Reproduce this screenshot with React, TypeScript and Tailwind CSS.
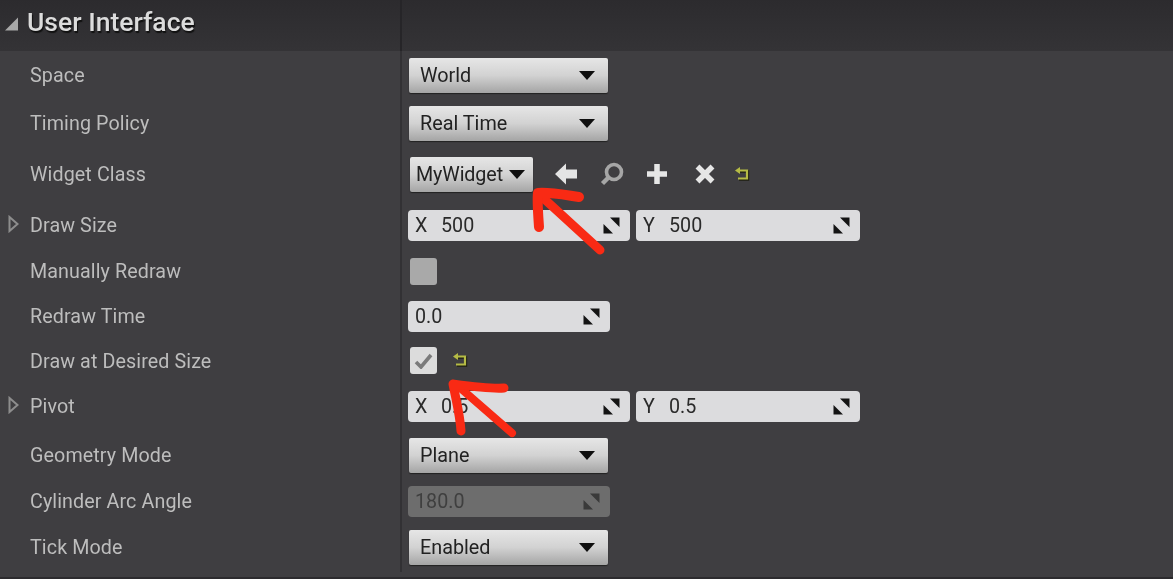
import type { ReactNode } from 'react'

const labelFont = 'font-["Roboto",sans-serif]'

function Row({ label, height, caret, children }: { label: string; height: string; caret?: boolean; children: ReactNode }) {
  return (
    <div className={`flex ${height}`}>
      <div className="w-[402px] shrink-0 flex items-center border-r-2 border-[#323134]">
        <div className="w-[30px] shrink-0 pl-[8px] flex items-center">
          {caret && (
            <svg width="11" height="18" viewBox="0 0 11 18" className="-mt-[2px]">
              <path d="M1.5 2 L9.5 9 L1.5 16 Z" fill="none" stroke="#8d8d8d" strokeWidth="2" />
            </svg>
          )}
        </div>
        <span className="text-[19.7px] tracking-[0.1px] text-[#bdbdbd] translate-y-[0.5px]">{label}</span>
      </div>
      <div className="flex-1 flex items-center pl-[6px] min-w-0">{children}</div>
    </div>
  )
}

function Caret({ className }: { className?: string }) {
  return (
    <svg width="16" height="9" viewBox="0 0 16 9" className={className}>
      <path d="M0 0 H16 L8 9 Z" fill="#0f0f0f" />
    </svg>
  )
}

function Dropdown({ value }: { value: string }) {
  return (
    <div className="ml-[1px] w-[199px] h-[35px] rounded-[2px] flex items-center justify-between pl-[11px] pr-[13px] bg-gradient-to-b from-[#e6e6e6] via-[#d2d2d2] to-[#a5a5a5] shadow-[0_1px_1px_#222] text-[19.8px] text-[#222]">
      <span className="translate-y-[0.5px]">{value}</span>
      <Caret />
    </div>
  )
}

function DragHandle({ dim }: { dim?: boolean }) {
  const fill = dim ? '#3a3a3a' : '#141414'
  return (
    <svg width="17" height="17" viewBox="0 0 17 17">
      <path d="M16.5 0.5 H7 L16.5 10 Z" fill={fill} />
      <path d="M0.5 16.5 H10 L0.5 7 Z" fill={fill} />
    </svg>
  )
}

function NumberField({ axis, value, width, dim }: { axis?: string; value: string; width: string; dim?: boolean }) {
  return (
    <div className={`${width} h-[31px] rounded-[4px] flex items-center justify-between pr-[10px] pl-[7px] text-[19.7px] ${dim ? 'bg-[#6d6d6d] text-[#3f3f3f]' : 'bg-[#dcdcde] text-[#2a2a2a]'}`}>
      <span className="flex translate-y-[0.5px]">
        {axis && <span className="w-[26px]">{axis}</span>}
        <span>{value}</span>
      </span>
      <DragHandle dim={dim} />
    </div>
  )
}

function Vector({ x, y }: { x: string; y: string }) {
  return (
    <div className="flex gap-[6px]">
      <NumberField axis="X" value={x} width="w-[222px]" />
      <NumberField axis="Y" value={y} width="w-[224px]" />
    </div>
  )
}

function ResetIcon() {
  return (
    <svg width="16" height="15" viewBox="0 0 16 15">
      <path d="M5 3.5 H13 V11.5 H4" fill="none" stroke="#1f1f10" strokeWidth="2.4" transform="translate(1 1)" />
      <path d="M5 3.5 H13 V11.5 H4" fill="none" stroke="#b5bb45" strokeWidth="2.2" />
      <path d="M6 0 V7 L1 3.5 Z" fill="#b5bb45" />
    </svg>
  )
}

function Checkbox({ checked }: { checked?: boolean }) {
  return (
    <div className={`ml-[2px] w-[27px] h-[27px] rounded-[3px] flex items-center justify-center ${checked ? 'bg-[#dcdcdc]' : 'bg-[#a9a9a9]'}`}>
      {checked && (
        <svg width="19" height="16" viewBox="0 0 19 16">
          <path d="M2 9 L7 14 L17 2" fill="none" stroke="#7b7b7b" strokeWidth="3.6" />
        </svg>
      )}
    </div>
  )
}

function WidgetPicker() {
  return (
    <div className="flex items-center">
      <div className="ml-[2px] w-[123px] h-[35px] rounded-[2px] flex items-center justify-between pl-[6px] pr-[8px] bg-gradient-to-b from-[#e6e6e6] via-[#d2d2d2] to-[#a5a5a5] shadow-[0_1px_1px_#222] text-[19.7px] text-[#222]">
        <span className="translate-y-[0.5px] tracking-[-0.1px]">MyWidget</span>
        <Caret />
      </div>
      <svg width="24" height="24" viewBox="0 0 24 24" className="ml-[21px]">
        <path d="M1 12 L12 1.5 V7.5 H23 V16.5 H12 V22.5 Z" fill="#e4e4e4" />
      </svg>
      <svg width="24" height="24" viewBox="0 0 24 24" className="ml-[22px]">
        <circle cx="14" cy="10" r="7.5" fill="none" stroke="#a6a6a6" strokeWidth="3.6" />
        <path d="M8.5 15.5 L2.5 21.5" stroke="#a6a6a6" strokeWidth="4.5" />
      </svg>
      <svg width="22" height="22" viewBox="0 0 22 22" className="ml-[22px]">
        <path d="M11 1 V21 M1 11 H21" stroke="#e6e6e6" strokeWidth="5.5" />
      </svg>
      <svg width="22" height="22" viewBox="0 0 22 22" className="ml-[26px]">
        <path d="M3.5 3.5 L18.5 18.5 M18.5 3.5 L3.5 18.5" stroke="#e6e6e6" strokeWidth="5.5" />
      </svg>
      <div className="ml-[18px] flex">
        <ResetIcon />
      </div>
    </div>
  )
}

export default function App() {
  return (
    <div className={`relative w-[1173px] h-[579px] overflow-hidden bg-[#3f3e41] ${labelFont} blur-[0.6px]`}>
      <div className="h-[51px] flex bg-gradient-to-b from-[#2c2b2e] to-[#343336]">
        <div className="w-[402px] flex items-center border-r-2 border-[#262528]">
          <svg width="15" height="14" viewBox="0 0 15 14" className="ml-[4px] -mt-[3px]">
            <path d="M14 0.5 V13.5 H1 Z" fill="#a8a8a8" />
          </svg>
          <span className="ml-[8px] text-[26.5px] font-medium text-[#dcdcdc] [text-shadow:1px_2px_1px_#111] -translate-y-[4px]">User Interface</span>
        </div>
      </div>
      <Row label="Space" height="h-[48px]"><Dropdown value="World" /></Row>
      <Row label="Timing Policy" height="h-[48px]"><Dropdown value="Real Time" /></Row>
      <Row label="Widget Class" height="h-[54px]"><WidgetPicker /></Row>
      <Row label="Draw Size" height="h-[48px]" caret><Vector x="500" y="500" /></Row>
      <Row label="Manually Redraw" height="h-[44px]"><Checkbox /></Row>
      <Row label="Redraw Time" height="h-[46px]"><NumberField value="0.0" width="w-[202px]" /></Row>
      <Row label="Draw at Desired Size" height="h-[43px]">
        <div className="flex items-center">
          <Checkbox checked />
          <div className="ml-[15px]"><ResetIcon /></div>
        </div>
      </Row>
      <Row label="Pivot" height="h-[48px]" caret><Vector x="0.5" y="0.5" /></Row>
      <Row label="Geometry Mode" height="h-[50px]"><Dropdown value="Plane" /></Row>
      <Row label="Cylinder Arc Angle" height="h-[42px]"><NumberField value="180.0" width="w-[202px]" dim /></Row>
      <Row label="Tick Mode" height="h-[50px]"><Dropdown value="Enabled" /></Row>
      <div className="absolute left-0 right-0 bottom-0 h-[2px] bg-[#2c2b2e]" />
      {/* red annotations drawn over the panel */}
      <svg className="absolute inset-0" width="1173" height="579" viewBox="0 0 1173 579" fill="none" stroke="#f92a14" strokeLinecap="round" strokeLinejoin="round">
        <path d="M600 250 L541 196" strokeWidth="9" />
        <path d="M539 227 C538 212 537 200 538 193 C550 192 565 195 579 197" strokeWidth="10" />
        <path d="M512 433 L458 386" strokeWidth="8" />
        <path d="M461 431 C460 415 456 400 453 384 C468 386 490 389 504 388" strokeWidth="9" />
      </svg>
    </div>
  )
}
